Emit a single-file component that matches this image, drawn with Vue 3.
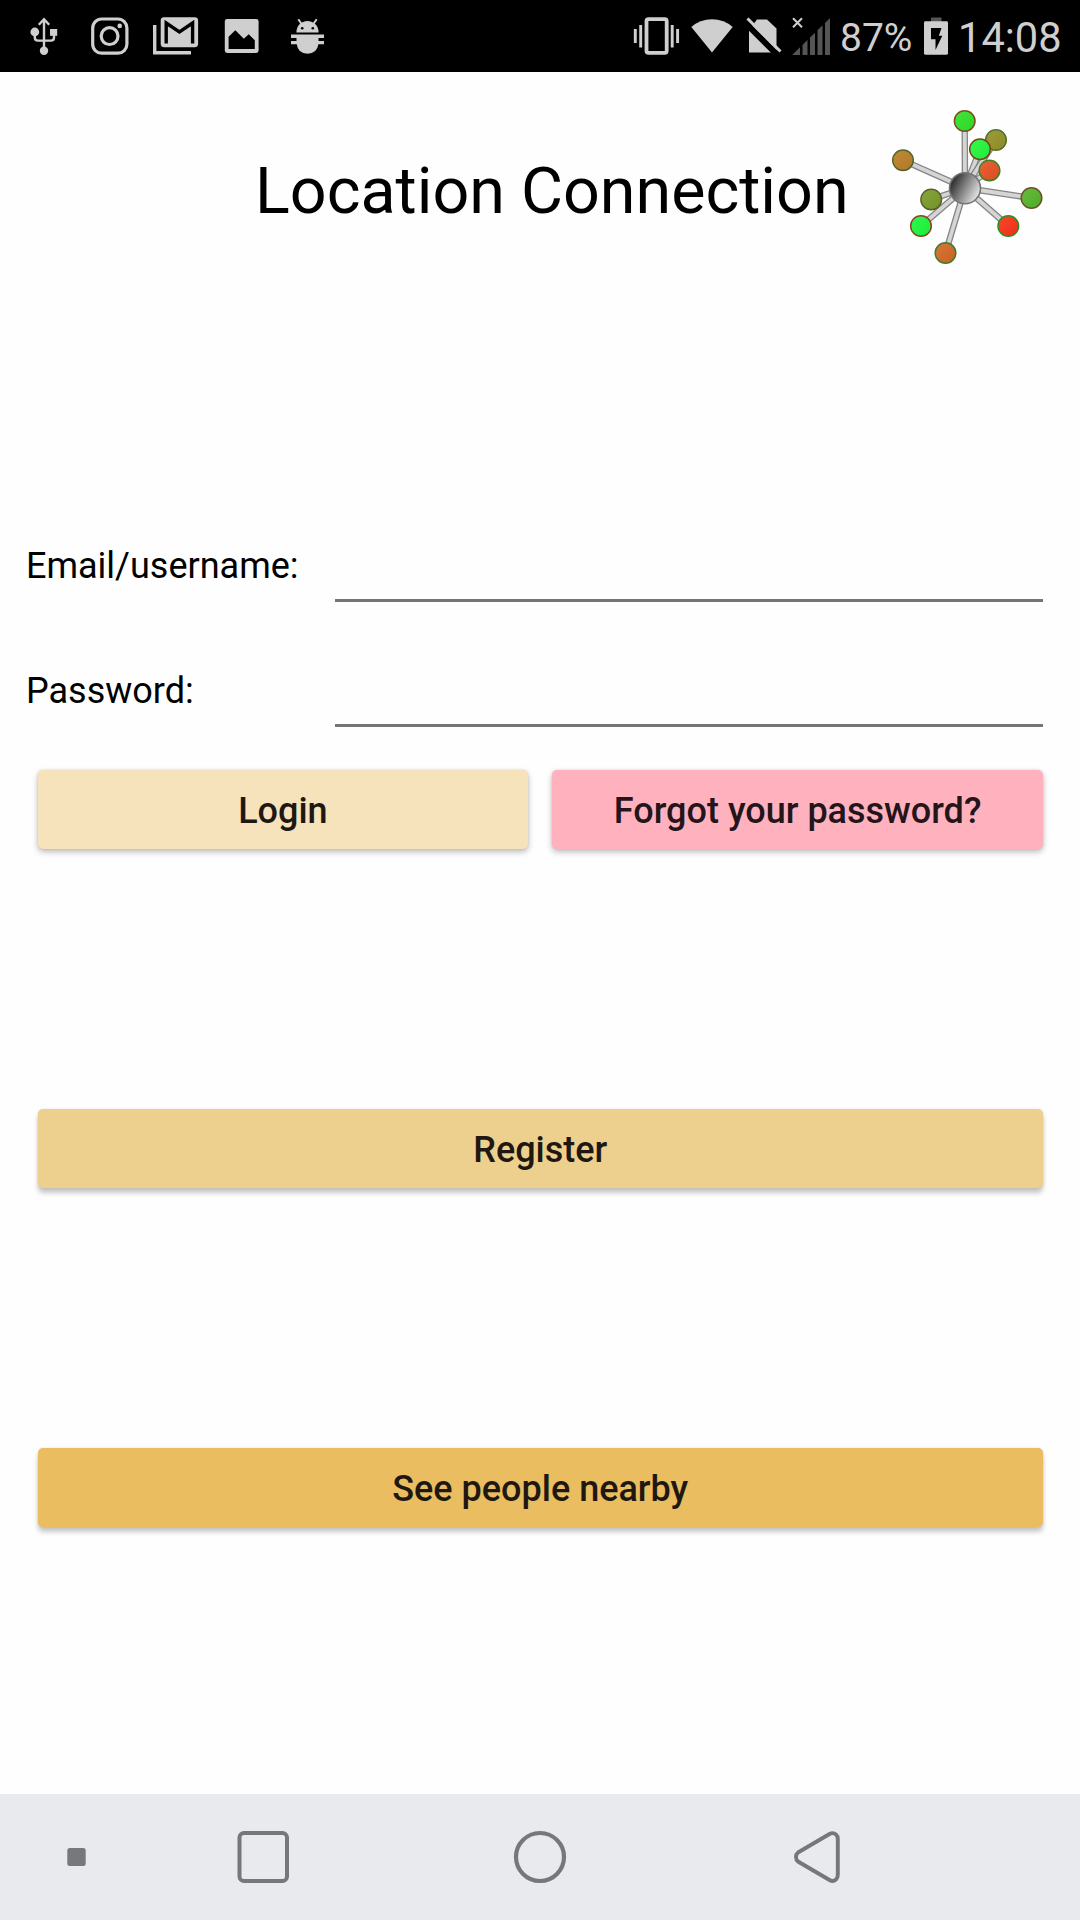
<script setup>
const spokes = [
  [964.7, 120], [980, 148.3], [996, 139], [989.5, 169.5], [903, 159.3],
  [931.2, 198.5], [921, 225], [1031.5, 197], [1008.3, 225], [945.5, 252]
]
const balls = [
  { x: 964.7, y: 120, fill: '#31e62b', rim: '#7c4a20' },
  { x: 996, y: 139, fill: '#96942b', rim: '#56702a' },
  { x: 980, y: 148.3, fill: '#25fb3c', rim: '#75451d' },
  { x: 989.5, y: 169.5, fill: '#e95425', rim: '#3b8126' },
  { x: 903, y: 159.3, fill: '#bd812a', rim: '#52642a' },
  { x: 931.2, y: 198.5, fill: '#7c9f2b', rim: '#59602a' },
  { x: 921, y: 225, fill: '#1dfc3e', rim: '#8a4420' },
  { x: 1031.5, y: 197, fill: '#57b72c', rim: '#6c5027' },
  { x: 1008.3, y: 225, fill: '#fb3519', rim: '#2c8b27' },
  { x: 945.5, y: 252, fill: '#d56a27', rim: '#3b7c28' }
]
</script>

<template>
  <div class="screen">
    <header class="status">
      <svg class="usb" width="32" height="40" viewBox="28 16 32 40">
        <g fill="#cfcfcf">
          <circle cx="44" cy="50.7" r="4.2" />
          <circle cx="34.8" cy="32" r="4.4" />
          <rect x="50" y="29" width="7.2" height="6.8" />
        </g>
        <g fill="none" stroke="#cfcfcf" stroke-width="2.4">
          <path d="M44 50V20M38.8 24.8L44 19.3L49.2 24.8" />
          <path d="M34.8 34V37.5Q34.8 40.6 38 40.6H51Q54 40.6 54 37.5V34" />
        </g>
      </svg>
      <svg class="insta" width="40" height="40" viewBox="90 16 40 40">
        <g fill="none" stroke="#cfcfcf" stroke-width="3.2">
          <rect x="92.7" y="19" width="34.2" height="34.2" rx="9" />
          <circle cx="109.6" cy="36.1" r="8.4" />
        </g>
        <circle cx="119.7" cy="25.9" r="2.3" fill="#cfcfcf" />
      </svg>
      <svg class="mail" width="48" height="40" viewBox="152 16 48 40">
        <path d="M154.7 25V52.8H191" fill="none" stroke="#cfcfcf" stroke-width="3.4" />
        <rect x="160.7" y="17.2" width="37.4" height="30" rx="3.4" fill="#cfcfcf" />
        <path d="M166.2 43.6V23L179.4 32L192.6 23V43.6" fill="none" stroke="#000" stroke-width="3.4" />
      </svg>
      <svg class="photo" width="36" height="40" viewBox="224 16 36 40">
        <rect x="224.8" y="19" width="33.8" height="34" rx="2.4" fill="#cfcfcf" />
        <path d="M228.6 49V36.8L235.3 30.2L243.8 38.8L248.7 34.3L254.8 40.2V49Z" fill="#000" />
      </svg>
      <svg class="bug" width="36" height="40" viewBox="290 16 36 40">
        <g fill="#cfcfcf">
          <path d="M296.4 32.6Q296.6 26 301 23Q307.5 19 314 23Q318.4 26 318.6 32.6Z" />
          <path d="M291 34.5H324V38H318.5V41H324V44.2H318.4Q317 53.5 307.5 53.7Q298 53.5 296.7 44.2H291V41H296.5V38H291Z" />
        </g>
        <path d="M298.3 19.3L301.6 24M316.7 19.3L313.4 24" stroke="#cfcfcf" stroke-width="2" />
        <circle cx="302.2" cy="28.3" r="1.3" />
        <circle cx="312.8" cy="28.3" r="1.3" />
      </svg>
      <span class="spacer"></span>
      <svg class="vibrate" width="48" height="40" viewBox="632 16 48 40">
        <rect x="646.5" y="19.2" width="20.2" height="33.6" rx="2" fill="none" stroke="#cfcfcf" stroke-width="3.8" />
        <path d="M640.7 25V47.4M635.3 29V43M672.2 25V47.4M677.6 29V43" stroke="#cfcfcf" stroke-width="2.9" />
      </svg>
      <svg class="wifi" width="44" height="40" viewBox="690 16 44 40">
        <path d="M712 52.6L691.3 27Q700 19.2 712 19.2T732.7 27Z" fill="#cfcfcf" />
      </svg>
      <svg class="nosim" width="36" height="40" viewBox="746 16 36 40">
        <path d="M749 52.5V30L757 19.4H767L776.5 28.6V52.5Z" fill="#cfcfcf" />
        <path d="M744 21.5L778 55.5" stroke="#000" stroke-width="6" />
        <path d="M747.5 18.5L780.5 51.5" stroke="#cfcfcf" stroke-width="3" />
      </svg>
      <svg class="signal" width="40" height="40" viewBox="791 16 40 40">
        <path d="M793 18.3L802 27.3M802 18.3L793 27.3" stroke="#cfcfcf" stroke-width="2" />
        <path d="M792 55L800 47.3V55ZM802.5 55V44.9L807.5 40V55ZM810 55V37.6L815 32.7V55ZM817.5 55V30.2L822.5 25.3V55ZM825 55V22.9L830 18V55Z" fill="#555" />
      </svg>
      <span class="percent">87%</span>
      <svg class="battery" width="26" height="40" viewBox="923 16 26 40">
        <rect x="931" y="17.5" width="10.5" height="5" fill="#555" />
        <rect x="924" y="21.3" width="24" height="33.4" rx="1.4" fill="#cfcfcf" />
        <path d="M931 28H941.5L938.8 35.7H942.3L935.5 50V39.3H931Z" fill="#000" />
      </svg>
      <span class="clock">14:08</span>
    </header>

    <main class="content">
      <div class="heading">
        <h1>Location Connection</h1>
        <svg class="logo" width="160" height="160" viewBox="890 107 160 160">
          <defs>
            <linearGradient id="hub" x1="0.05" y1="0.35" x2="0.9" y2="0.8">
              <stop offset="0" stop-color="#303030" />
              <stop offset="1" stop-color="#e6e6e6" />
            </linearGradient>
            <linearGradient id="shade" x1="0" y1="0" x2="1" y2="1">
              <stop offset="0" stop-color="#fff" stop-opacity="0.08" />
              <stop offset="1" stop-color="#000" stop-opacity="0.07" />
            </linearGradient>
          </defs>
          <g v-for="(s, i) in spokes" :key="'s' + i">
            <line x1="965" y1="187" :x2="s[0]" :y2="s[1]" stroke="#858585" stroke-width="6.4" />
            <line x1="965" y1="187" :x2="s[0]" :y2="s[1]" stroke="#d5d5d5" stroke-width="3.8" />
          </g>
          <g v-for="(b, i) in balls" :key="'b' + i">
            <circle :cx="b.x" :cy="b.y" r="10.3" :fill="b.fill" :stroke="b.rim" stroke-width="1.5" />
            <circle :cx="b.x" :cy="b.y" r="10" fill="url(#shade)" />
          </g>
          <circle cx="965" cy="187.3" r="15.5" fill="url(#hub)" stroke="#747474" stroke-width="1.6" />
        </svg>
      </div>

      <form class="login" @submit.prevent>
        <div class="field">
          <label for="user">Email/username:</label>
          <input id="user" type="text" />
        </div>
        <div class="field">
          <label for="pass">Password:</label>
          <input id="pass" type="password" />
        </div>
        <div class="actions">
          <button class="btn sand" type="button">Login</button>
          <button class="btn pink" type="button">Forgot your password?</button>
        </div>
      </form>

      <button class="btn register" type="button">Register</button>
      <button class="btn nearby" type="button">See people nearby</button>
    </main>

    <nav class="navbar">
      <svg class="dot" width="20" height="20" viewBox="66 1847 20 20">
        <rect x="67.3" y="1848" width="18.4" height="18" rx="2.5" fill="#777879" />
      </svg>
      <svg class="recent" width="56" height="56" viewBox="235 1829 56 56">
        <rect x="239.5" y="1833" width="47.5" height="48" rx="4.5" fill="none" stroke="#757779" stroke-width="4" />
      </svg>
      <svg class="home" width="56" height="56" viewBox="512 1829 56 56">
        <circle cx="540" cy="1857" r="24" fill="none" stroke="#757779" stroke-width="4.2" />
      </svg>
      <svg class="back" width="50" height="56" viewBox="792 1829 50 56">
        <path d="M798 1852.5L829.5 1834Q833 1832 836 1834.5Q837.8 1836 837.8 1839V1875Q837.8 1878 836 1879.5Q833 1882 829.5 1880L798 1861.5Q796 1860 796 1857T798 1852.5Z" fill="none" stroke="#757779" stroke-width="3.9" />
      </svg>
    </nav>
  </div>
</template>

<style>
body {
  margin: 0;
}
</style>

<style scoped>
.screen {
  width: 1080px;
  height: 1920px;
  display: flex;
  flex-direction: column;
  overflow: hidden;
  background: #fefefe;
  font-family: Roboto, "Liberation Sans", sans-serif;
  color: #000;
}
svg {
  display: block;
  flex: none;
}
.status {
  box-sizing: border-box;
  height: 72px;
  padding: 0 18px 0 28px;
  display: flex;
  align-items: center;
  background: #000;
  color: #cfcfcf;
  white-space: nowrap;
}
.insta { margin-left: 30px; }
.mail { margin-left: 22px; }
.photo { margin-left: 24px; }
.bug { margin-left: 30px; }
.spacer { flex: 1; }
.wifi { margin-left: 10px; }
.nosim { margin-left: 12px; }
.signal { margin-left: 9px; }
.percent {
  width: 82px;
  margin-left: 9px;
  padding-top: 3px;
  font-size: 39px;
  line-height: 72px;
}
.battery { margin-left: 1px; }
.clock {
  width: 104px;
  margin-left: 9px;
  padding-top: 4px;
  font-size: 41.6px;
  line-height: 72px;
}
.content {
  flex: 1;
  display: flex;
  flex-direction: column;
}
.heading {
  height: 236px;
  display: flex;
  align-items: center;
}
h1 {
  width: 635px;
  margin: 2px 0 0 255px;
  font-size: 64.6px;
  font-weight: 400;
  line-height: 80px;
  white-space: nowrap;
}
.logo {
  margin-bottom: 5px;
}
.login {
  margin-top: 195px;
}
.field {
  display: flex;
  align-items: flex-end;
  height: 99px;
  padding: 0 37px 0 26px;
}
.field + .field {
  margin-top: 26px;
}
label {
  width: 309px;
  font-size: 36px;
  line-height: 42px;
  margin-bottom: 15px;
}
input {
  box-sizing: border-box;
  flex: 1;
  min-width: 0;
  height: 80px;
  padding: 0;
  border: 0;
  border-bottom: 3px solid #757575;
  border-radius: 0;
  background: transparent;
  font: 36px Roboto, sans-serif;
  outline: none;
}
.actions {
  display: flex;
  gap: 24px;
  margin: 42.5px 37px 0 37.5px;
}
.btn {
  box-sizing: border-box;
  height: 79.5px;
  padding: 3px 0 0;
  border: 0;
  border-radius: 5px;
  font-family: Roboto, "Liberation Sans", sans-serif;
  font-size: 36px;
  font-weight: 500;
  line-height: 42px;
  color: #1f1812;
  box-shadow: 0 3px 6px rgba(0, 0, 0, 0.26), 0 0 3px rgba(0, 0, 0, 0.1);
}
.actions .btn {
  flex: 1;
}
.sand { background: #f6e2bb; }
.pink { background: #ffb1be; color: #24151a; }
.register,
.nearby {
  margin: 259.5px 37px 0 37.5px;
  box-shadow: 0 5px 5px rgba(0, 0, 0, 0.22), 0 0 3px rgba(0, 0, 0, 0.1);
}
.register { background: #eed08e; }
.nearby { background: #e9bd60; }
.navbar {
  height: 126px;
  display: flex;
  align-items: center;
  background: #e9eaed;
}
.dot { margin-left: 66px; }
.recent { margin-left: 149px; }
.home { margin-left: 221px; }
.back { margin-left: 224px; }
</style>
